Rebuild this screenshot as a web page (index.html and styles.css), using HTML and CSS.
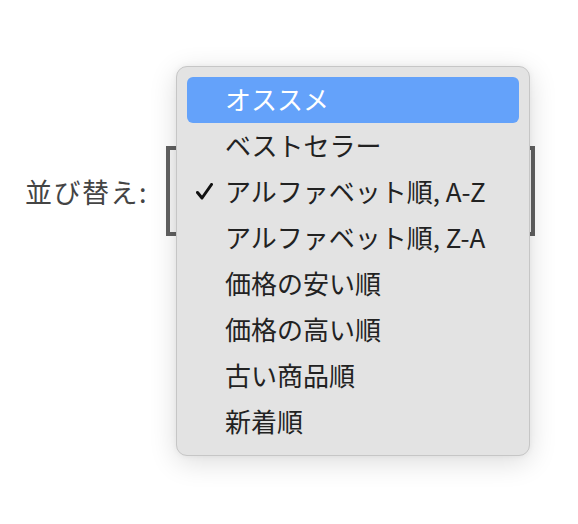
FILE: index.html
```html
<!DOCTYPE html>
<html lang="ja">
<head>
<meta charset="utf-8">
<link rel="stylesheet" href="styles.css">
</head>
<body>
<div class="page">
  <div class="sort-row">
    <span class="label">並び替え:</span>
    <div class="select"></div>
  </div>
  <ul class="menu">
    <li class="item active">オススメ</li>
    <li class="item">ベストセラー</li>
    <li class="item checked"><svg class="check" viewBox="0 0 17 17" width="17" height="17"><path d="M1.5 9.5 L6 15 L15.5 1.5" fill="none" stroke="#111" stroke-width="3" stroke-linecap="round" stroke-linejoin="round"/></svg>アルファベット順, A-Z</li>
    <li class="item">アルファベット順, Z-A</li>
    <li class="item">価格の安い順</li>
    <li class="item">価格の高い順</li>
    <li class="item">古い商品順</li>
    <li class="item">新着順</li>
  </ul>
</div>
</body>
</html>
```
FILE: styles.css
```css
html, body {
  margin: 0;
  padding: 0;
  background: #ffffff;
}
body {
  font-family: "Noto Sans CJK JP", "Noto Sans", sans-serif;
  width: 578px;
  height: 524px;
  overflow: hidden;
}
.page {
  position: relative;
  width: 578px;
  height: 524px;
}
.sort-row {
  display: flex;
  align-items: center;
  gap: 19px;
  padding-top: 146px;
}
.label {
  width: 148px;
  text-align: right;
  font-size: 27px;
  letter-spacing: 1.5px;
  color: #444;
  line-height: 1;
  margin-right: -1.5px;
}
.select {
  width: 361px;
  height: 82px;
  border: 4px solid #616161;
  background: #f7f7f7;
}
.menu {
  position: absolute;
  left: 176px;
  top: 66px;
  width: 332px;
  height: 368px;
  margin: 0;
  padding: 10px 10px;
  list-style: none;
  background: #e3e3e3;
  border: 1px solid #c6c6c6;
  border-radius: 11px;
  box-shadow: 0 6px 28px rgba(0, 0, 0, 0.14), 0 0 6px rgba(0, 0, 0, 0.05);
}
.item {
  position: relative;
  height: 46px;
  display: flex;
  align-items: center;
  padding-left: 38px;
  font-size: 26px;
  color: #222;
  border-radius: 6px;
  line-height: 1;
  padding-bottom: 2px;
  box-sizing: border-box;
}
.item.active {
  background: #64a2fa;
  color: #ffffff;
}
.check {
  position: absolute;
  left: 9px;
  top: 14px;
}
```
